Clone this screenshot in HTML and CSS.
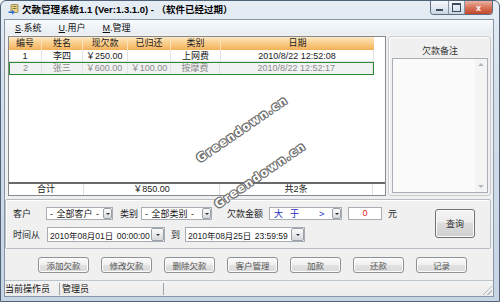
FILE: index.html
```html
<!DOCTYPE html>
<html lang="zh">
<head>
<meta charset="utf-8">
<title>欠款管理系统</title>
<link rel="stylesheet" href="styles.css">
</head>
<body>
<div class="window">
  <div class="titlebar">
    <svg class="appicon" viewBox="0 0 11 11" width="11" height="11">
      <rect x="3" y="0.5" width="7" height="8" rx="1" fill="#e9d58a" stroke="#8a7a40" stroke-width="0.8"/>
      <rect x="4.5" y="2" width="4" height="1" fill="#8a7a40"/>
      <rect x="4.5" y="4" width="4" height="1" fill="#8a7a40"/>
      <path d="M0.5 7.5 L4 7.5 L4 5.8 L7 8.3 L4 10.8 L4 9.1 L0.5 9.1 Z" fill="#2f6fd0"/>
    </svg>
    <span class="title">欠款管理系统1.1 (Ver:1.3.1.0) - （软件已经过期）</span>
    <div class="caption-btns">
      <span class="cb min"></span>
      <span class="cb max"></span>
      <span class="cb close">x</span>
    </div>
  </div>

  <div class="client">
    <div class="menubar">
      <span><u>S</u>.系统</span>
      <span><u>U</u>.用户</span>
      <span><u>M</u>.管理</span>
    </div>

    <div class="main">
      <div class="grid">
        <div class="grid-head">
          <div class="c c1">编号</div>
          <div class="c c2">姓名</div>
          <div class="c c3">现欠款</div>
          <div class="c c4">已归还</div>
          <div class="c c5">类别</div>
          <div class="c c6">日期</div>
        </div>
        <div class="grid-row">
          <div class="c c1">1</div>
          <div class="c c2">李四</div>
          <div class="c c3 l">￥250.00</div>
          <div class="c c4 l"></div>
          <div class="c c5">上网费</div>
          <div class="c c6">2010/8/22 12:52:08</div>
        </div>
        <div class="grid-row sel">
          <div class="c c1">2</div>
          <div class="c c2">张三</div>
          <div class="c c3 l">￥600.00</div>
          <div class="c c4 l">￥100.00</div>
          <div class="c c5">按摩费</div>
          <div class="c c6">2010/8/22 12:52:17</div>
        </div>
        <div class="grid-fill"></div>
        <div class="grid-sum">
          <div class="s s1">合计</div>
          <div class="s s2">￥850.00</div>
          <div class="s s3">共2条</div>
        </div>
      </div>

      <div class="notes">
        <div class="notes-title">欠款备注</div>
        <div class="notes-box">
          <div class="vscroll"><span class="up"></span><span class="down"></span></div>
        </div>
      </div>
    </div>

    <div class="filter">
      <div class="fields">
        <div class="row">
          <span class="lbl w33">客户</span>
          <div class="combo w67"><span>- 全部客户 -</span><span class="dd"></span></div>
          <span class="lbl w21 ml7">类别</span>
          <div class="combo w71"><span>- 全部类别 -</span><span class="dd"></span></div>
          <span class="lbl w42 ml15">欠款金额</span>
          <div class="combo w73 blue"><span class="k1">大</span><span class="k2">于</span><span class="k3">&gt;</span><span class="dd"></span></div>
          <div class="num">0</div>
          <span class="lbl ml6">元</span>
        </div>
        <div class="row row2">
          <span class="lbl w34">时间从</span>
          <div class="date w118"><span>2010年08月01日 00:00:00</span><span class="dd"></span></div>
          <span class="lbl w14 ml6">到</span>
          <div class="date w120"><span>2010年08月25日 23:59:59</span><span class="dd"></span></div>
        </div>
      </div>
      <div class="query">查询</div>
    </div>

    <div class="actions">
      <div class="btn">添加欠款</div>
      <div class="btn">修改欠款</div>
      <div class="btn">删除欠款</div>
      <div class="btn">客户管理</div>
      <div class="btn">加款</div>
      <div class="btn">还款</div>
      <div class="btn">记录</div>
    </div>

    <div class="status">
      <div class="st st1">当前操作员</div>
      <div class="st st2">管理员</div>
      <div class="st st3"></div>
      <div class="grip"></div>
    </div>
  </div>

  <div class="wm wm1">Greendown.cn</div>
  <div class="wm wm2">Greendown.cn</div>
</div>
</body>
</html>
```

FILE: styles.css
```css
* { box-sizing: border-box; }

body {
  margin: 0;
  font-family: "Liberation Sans", "Noto Sans CJK SC", sans-serif;
  font-size: 9px;
  color: #1a1a1a;
  background: #fff;
}

.window {
  position: relative;
  width: 500px;
  height: 302px;
  border: 1px solid #4f6278;
  border-radius: 6px 6px 0 0;
  background: linear-gradient(#e6edf4, #d3dfea 30%, #c6d4e3);
  display: flex;
  flex-direction: column;
  overflow: hidden;
}

/* title bar */
.titlebar {
  height: 18px;
  display: flex;
  align-items: flex-start;
  padding-left: 7px;
  flex: none;
}
.appicon { margin-top: 3px; flex: none; }
.title {
  margin-left: 3px;
  margin-top: 3px;
  font-weight: bold;
  font-size: 9.5px;
  line-height: 12px;
  color: #000;
  white-space: nowrap;
}
.caption-btns {
  margin-left: auto;
  margin-right: 6px;
  display: flex;
  height: 14px;
  border: 1px solid #5d6f84;
  border-top: none;
  border-radius: 0 0 4px 4px;
  overflow: hidden;
}
.cb {
  width: 18px;
  background: linear-gradient(#f6f8fb, #e2e9f1 50%, #c9d4e0);
  border-right: 1px solid #8796a8;
  display: flex;
  align-items: center;
  justify-content: center;
}
.cb.max { width: 16px; }
.cb.close {
  width: 27px;
  border-right: none;
  background: linear-gradient(#eab2a3, #d87459 50%, #c2472c);
  color: #fff;
  font-weight: bold;
  font-size: 9px;
  line-height: 12px;
}
.min::before {
  content: "";
  width: 7px;
  height: 2px;
  background: #3d4d60;
  margin-top: 4px;
}
.max::before {
  content: "";
  width: 7px;
  height: 6px;
  border: 1px solid #3d4d60;
  border-top-width: 2px;
}

/* client area */
.client {
  flex: 1;
  margin: 0 5px 4px 3px;
  background: #f0f0f0;
  border: 1px solid #8797a9;
  display: flex;
  flex-direction: column;
}

.menubar {
  height: 14px;
  flex: none;
  display: flex;
  align-items: center;
  gap: 17px;
  padding-left: 10px;
  background: linear-gradient(#f8fafc, #e8edf2);
  color: #111;
}

.main {
  height: 162px;
  flex: none;
  display: flex;
  padding: 2px 0 0 3px;
}

/* grid */
.grid {
  width: 378px;
  border: 1px solid #858a91;
  background: #fff;
  display: flex;
  flex-direction: column;
}
.grid-head, .grid-row { display: flex; flex: none; }
.c {
  text-align: center;
  white-space: nowrap;
  overflow: hidden;
}
.c.l { text-align: left; padding-left: 3px; }
.c1 { width: 33px; }
.c2 { width: 41px; }
.c3 { width: 45px; }
.c4 { width: 43px; }
.c5 { width: 50px; }
.c6 { width: 153px; }

.grid-head .c {
  height: 13px;
  line-height: 13px;
  background: linear-gradient(#fde8c2, #f9cc88 50%, #f4b059);
  border-right: 1px solid #fbe2b8;
  color: #1c1c1c;
}
.grid-head .c6 { border-right: none; }

.grid-row .c {
  height: 12px;
  line-height: 12px;
  border-right: 1px solid #e3e3e3;
  border-bottom: 1px solid #e3e3e3;
}
.grid-row.sel {
  width: 365px;
  height: 13px;
  border: 1px solid #2f8a33;
  background: #f1f2f3;
  color: #8b8b8b;
}
.grid-row.sel .c { height: 11px; line-height: 11px; border-bottom: none; }
.grid-row.sel .c1 { width: 32px; }

.grid-fill { flex: 1; }

.grid-sum {
  flex: none;
  display: flex;
  height: 13px;
  border-top: 2px solid #6a6a6a;
}
.s {
  line-height: 11px;
  text-align: center;
  border-right: 1px solid #dedede;
}
.s1 { width: 75px; }
.s2 { width: 136px; }
.s3 { width: 153px; }

/* notes group */
.notes {
  margin-left: 2px;
  width: 103px;
  height: 160px;
  border: 1px solid #c8ccd0;
  border-radius: 3px;
  box-shadow: inset 1px 1px 0 #fff;
  padding: 8px 2px 2px 3px;
  display: flex;
  flex-direction: column;
}
.notes-title {
  height: 12px;
  line-height: 12px;
  text-align: center;
  color: #333;
}
.notes-box {
  margin-top: 1px;
  flex: 1;
  border: 1px solid #a9afb6;
  background: #fbfbfb;
  display: flex;
  justify-content: flex-end;
}
.vscroll {
  width: 12px;
  background: #f4f4f4;
  display: flex;
  flex-direction: column;
  justify-content: space-between;
  align-items: center;
  padding: 4px 0;
}
.up, .down {
  width: 0;
  height: 0;
  border-left: 3px solid transparent;
  border-right: 3px solid transparent;
}
.up { border-bottom: 3px solid #b4b8bd; }
.down { border-top: 3px solid #b4b8bd; }

/* filter panel */
.filter {
  flex: none;
  height: 50px;
  margin: 3px 2px 0 0;
  border: 1px solid #b6bdc5;
  border-radius: 2px;
  box-shadow: inset 1px 1px 0 #fff;
  display: flex;
}
.fields { padding: 7px 0 0 7px; }
.row {
  display: flex;
  align-items: center;
  height: 13px;
}
.row2 { margin-top: 7px; height: 15px; }
.lbl { white-space: nowrap; color: #1e1e2a; flex: none; }
.w14 { width: 14px; }
.w21 { width: 21px; }
.w33 { width: 33px; }
.w34 { width: 34px; }
.w42 { width: 42px; }
.w67 { width: 67px; }
.w71 { width: 71px; }
.w73 { width: 73px; }
.w118 { width: 118px; }
.w120 { width: 120px; }
.ml6 { margin-left: 6px; }
.ml7 { margin-left: 7px; }
.ml15 { margin-left: 15px; }

.combo, .date {
  flex: none;
  height: 13px;
  border: 1px solid #a7adb5;
  background: #fff;
  display: flex;
  align-items: center;
  padding-left: 3px;
  white-space: nowrap;
  word-spacing: 1px;
}
.date { height: 15px; padding-left: 2px; font-size: 8.5px; }
.dd {
  margin-left: auto;
  width: 9px;
  height: 11px;
  border: 1px solid #9aa0a7;
  border-radius: 2px;
  background: linear-gradient(#fbfbfb, #d6dade);
  display: flex;
  align-items: center;
  justify-content: center;
  flex: none;
}
.date .dd { width: 13px; height: 13px; }
.dd::before {
  content: "";
  width: 0;
  height: 0;
  border-left: 2px solid transparent;
  border-right: 2px solid transparent;
  border-top: 2px solid #333;
}
.blue { color: #1a2fb8; }
.k1 { margin-left: 1px; }
.k2 { margin-left: 7px; }
.k3 { margin-left: 20px; }

.num {
  flex: none;
  margin-left: 6px;
  width: 34px;
  height: 13px;
  border: 1px solid #a7adb5;
  background: #fff;
  color: #e02020;
  text-align: center;
  line-height: 11px;
}

.query {
  margin: 9px 15px 0 auto;
  width: 40px;
  height: 29px;
  border: 1px solid #707070;
  border-radius: 3px;
  background: linear-gradient(#f4f4f4, #ececec 45%, #dcdcdc 50%, #cfcfcf);
  box-shadow: inset 0 0 0 1px #fbfbfb;
  display: flex;
  align-items: center;
  justify-content: center;
  color: #333;
}

/* action buttons */
.actions {
  flex: none;
  height: 31px;
  display: flex;
  gap: 12px;
  padding: 8px 0 0 33px;
}
.btn {
  width: 51px;
  height: 16px;
  border: 1px solid #8e9297;
  border-radius: 3px;
  background: linear-gradient(#fafafa, #efefef 50%, #e2e2e2 51%, #dadada);
  box-shadow: inset 0 0 0 1px #fcfcfc;
  display: flex;
  align-items: center;
  justify-content: center;
  color: #555;
  font-size: 8.5px;
}

/* status bar */
.status {
  flex: 1;
  display: flex;
  align-items: center;
  border-top: 1px solid #bcc4cc;
  background: linear-gradient(#f3f3f3, #ececec);
  position: relative;
}
.st { height: 12px; line-height: 12px; white-space: nowrap; color: #111; }
.st1 { width: 55px; border-right: 1px solid #9da3a9; }
.st2 { width: 104px; padding-left: 2px; border-right: 1px solid #9da3a9; }
.st3 { flex: 1; }
.grip {
  position: absolute;
  right: 1px;
  bottom: 1px;
  width: 9px;
  height: 9px;
  background: linear-gradient(135deg, transparent 45%, #b9bec4 45%, #b9bec4 55%, transparent 55%, transparent 70%, #b9bec4 70%, #b9bec4 80%, transparent 80%);
}

/* watermark overlay */
.wm {
  position: absolute;
  width: 132px;
  height: 14px;
  line-height: 14px;
  text-align: center;
  font-family: "DejaVu Sans", sans-serif;
  font-weight: bold;
  font-size: 11.5px;
  letter-spacing: 1.2px;
  color: #fff;
  text-shadow: 1px 0 #6b6b6b, -1px 0 #6b6b6b, 0 1px #6b6b6b, 0 -1px #6b6b6b,
               1px 1px #8a8a8a, -1px -1px #8a8a8a, 1px -1px #8a8a8a, -1px 1px #8a8a8a;
  transform: rotate(-34.5deg);
  pointer-events: none;
  white-space: nowrap;
}
.wm1 { left: 175px; top: 121px; }
.wm2 { left: 193px; top: 167px; }
```
